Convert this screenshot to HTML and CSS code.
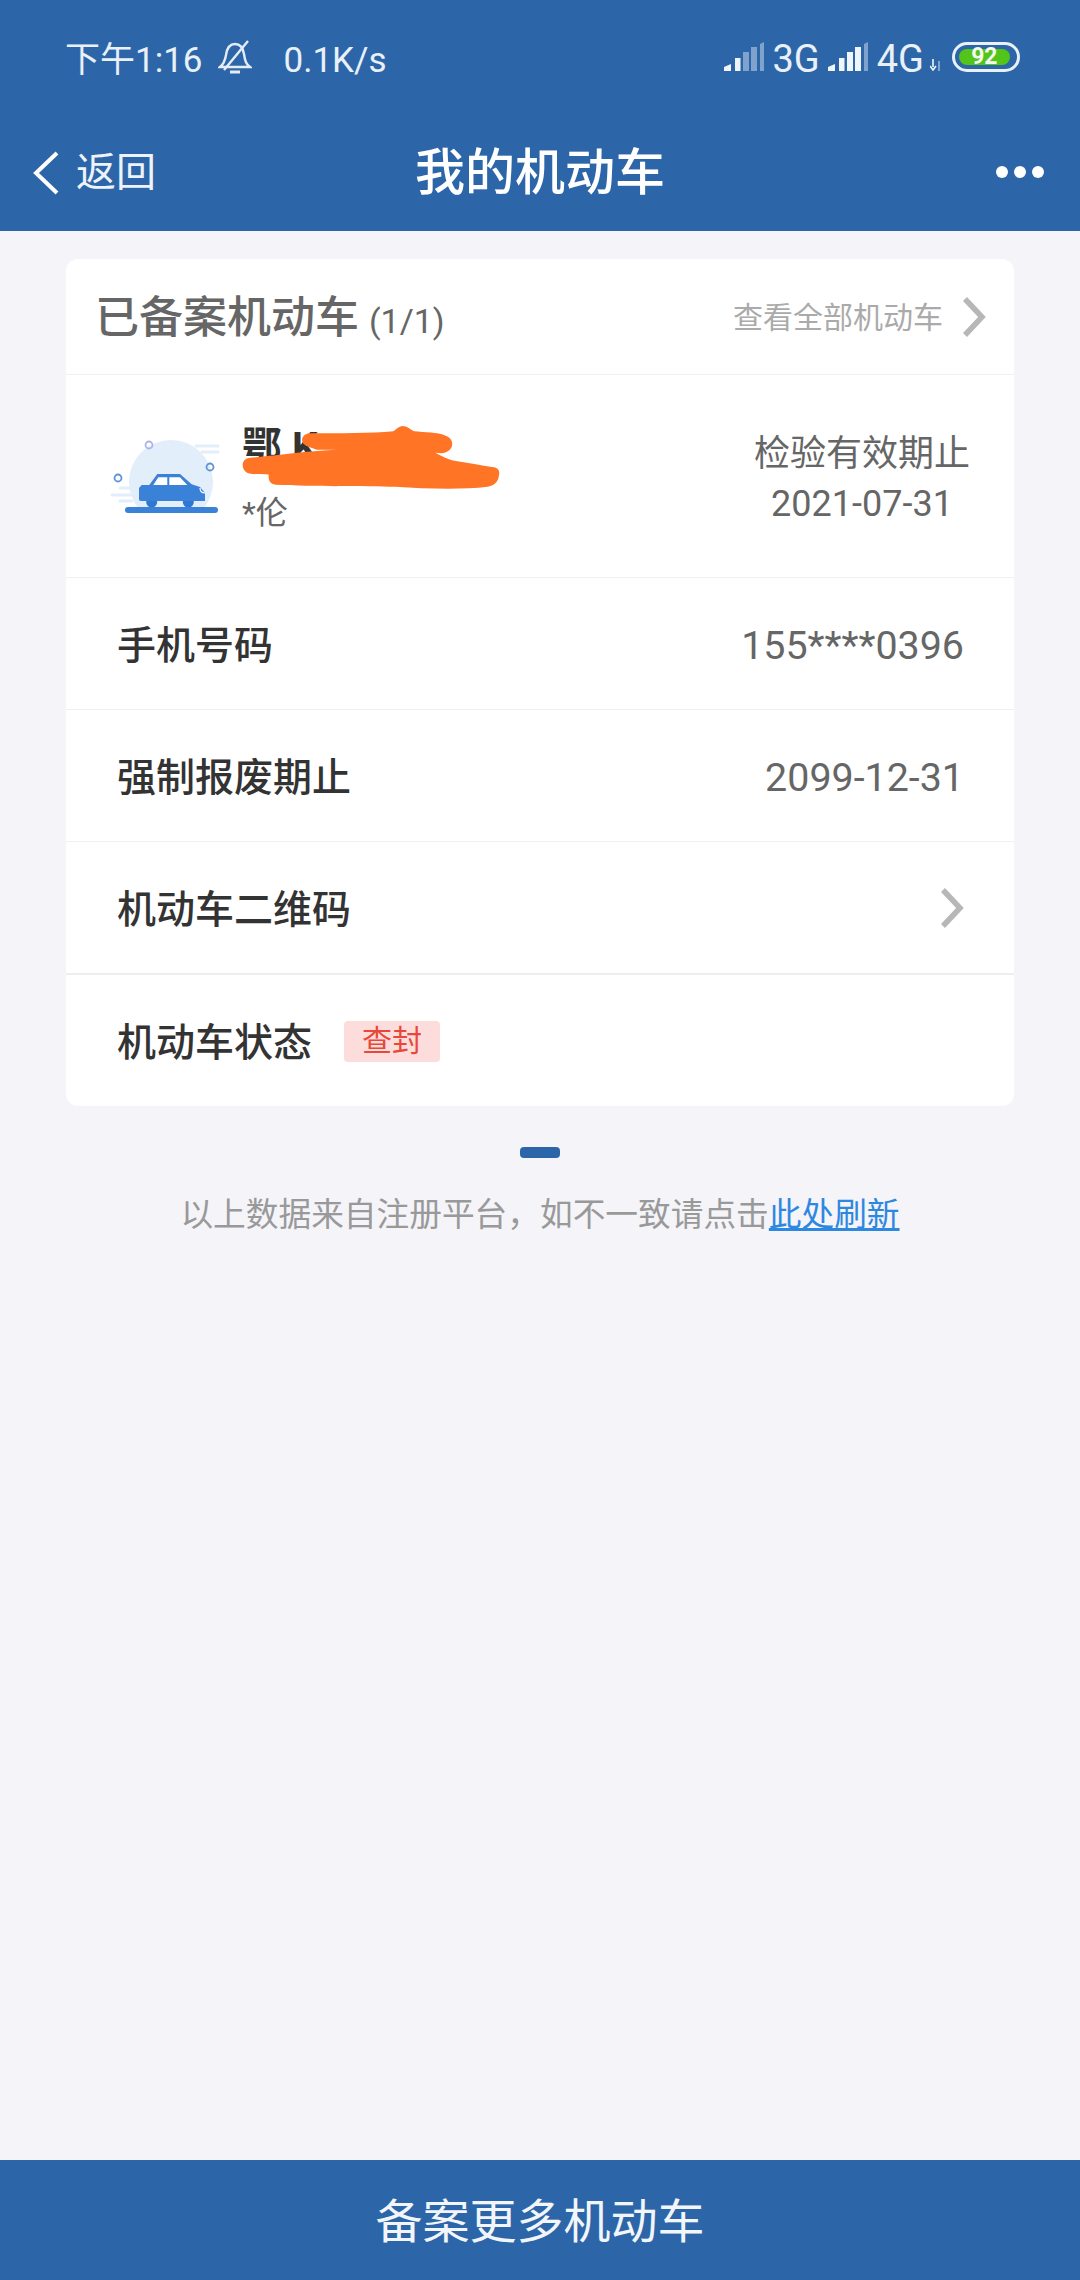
FILE: index.html
```html
<!DOCTYPE html>
<html lang="zh-CN">
<head>
  <meta charset="UTF-8">
  <title>我的机动车</title>
  <link rel="stylesheet" href="styles.css">
</head>
<body>

<header class="top">
  <div class="status">
    <div class="status-left">
      <span>下午1:16</span>
      <svg class="bell" width="34" height="36" viewBox="0 0 34 36" fill="none" stroke="#e4edf7" stroke-width="2.4">
        <path d="M2 28c4-3 5-6 6-12 1-7 4-11 9-11s8 4 9 10c1 7 2 10 6 13z"/>
        <path d="M30 2L6 31"/>
        <path d="M12 33h10" stroke-width="3"/>
      </svg>
      <span class="speed">0.1K/s</span>
    </div>
    <div class="status-right">
      <svg class="signal" width="40" height="29" viewBox="0 0 40 29">
        <path d="M0 29v-4l7-3v7z" fill="#f0f5fb"/>
        <rect x="11" y="16" width="5.5" height="13" fill="#f0f5fb"/>
        <rect x="19" y="10" width="6" height="19" fill="#7fa3cd"/>
        <rect x="27" y="5" width="6" height="24" fill="#7fa3cd"/>
        <path d="M36 2l4-2v29h-4z" fill="#7fa3cd"/>
      </svg>
      <span class="net">3G</span>
      <svg class="signal" width="40" height="29" viewBox="0 0 40 29">
        <path d="M0 29v-4l7-3v7z" fill="#f0f5fb"/>
        <rect x="11" y="16" width="5.5" height="13" fill="#f0f5fb"/>
        <rect x="19" y="10" width="6" height="19" fill="#f0f5fb"/>
        <rect x="27" y="5" width="6" height="24" fill="#f0f5fb"/>
        <path d="M36 2l4-2v29h-4z" fill="#7fa3cd"/>
      </svg>
      <span class="net">4G</span>
      <svg class="arrows" width="12" height="12" viewBox="0 0 12 12">
        <path d="M3 0v8M0 7l3 4 3-4" fill="none" stroke="#f0f5fb" stroke-width="1.6"/>
        <path d="M9 12V2" stroke="#7fa3cd" stroke-width="2"/>
      </svg>
      <div class="battery"><div class="battery-fill">92</div></div>
    </div>
  </div>
  <nav class="nav">
    <div class="back">
      <svg width="28" height="44" viewBox="0 0 28 44" fill="none" stroke="#fff" stroke-width="4">
        <path d="M25 2L4 22l21 20"/>
      </svg>
      <span>返回</span>
    </div>
    <h1>我的机动车</h1>
    <div class="more"><i></i><i></i><i></i></div>
  </nav>
</header>

<main class="content">
  <section class="card">
    <div class="card-head">
      <div class="card-title">已备案机动车 <small>(1/1)</small></div>
      <div class="see-all">
        <span>查看全部机动车</span>
        <svg width="24" height="40" viewBox="0 0 24 40" fill="none" stroke="#b7b7b7" stroke-width="5.5">
          <path d="M3 2l17 18L3 38"/>
        </svg>
      </div>
    </div>

    <div class="vehicle">
      <svg class="car" width="112" height="88" viewBox="0 0 112 88">
        <path d="M29.700 78A42 42 0 1 1 92.300 78z" fill="#e3eefb"/>
        <g fill="none" stroke="#e3eefb" stroke-width="3" stroke-linecap="round">
          <path d="M86 14h22M92 20h16M2 63h20M10 56h10M10 69h12"/>
        </g>
        <circle cx="39" cy="13" r="3.500" fill="none" stroke="#a9b4ea" stroke-width="1.800"/>
        <circle cx="8" cy="46" r="3.500" fill="none" stroke="#5f93d6" stroke-width="1.800"/>
        <circle cx="100" cy="35" r="3.500" fill="none" stroke="#5f93d6" stroke-width="1.800"/>
        <circle cx="41.700" cy="70" r="5.500" fill="#2f78d2"/>
        <circle cx="78.300" cy="70" r="5.500" fill="#2f78d2"/>
        <path d="M47.300 42H70l11.700 10.300L90 55l5 6v8H31c-1.500 0-2-1-2-2V56l2.700-3h7.600z" fill="#3a81d8"/>
        <path d="M43.300 53l5-7.700h9V53zM59.300 45.300H70l7.300 7.700h-18z" fill="#fff"/>
        <path d="M90 56c0 3 2 5 5 5" fill="none" stroke="#fff" stroke-width="1.200"/>
        <rect x="15" y="75" width="93" height="6" rx="3" fill="#3a81d8"/>
      </svg>
      <div class="plate">
        <div class="plate-no">鄂 K</div>
        <div class="owner">*伦</div>
      </div>
      <div class="valid">
        <div>检验有效期止</div>
        <div>2021-07-31</div>
      </div>
      <svg class="scribble" width="270" height="70" viewBox="0 0 264 68" preserveAspectRatio="none">
        <path d="M68 9c30 0 60 0 82-2 3-2 6-5 9-5 4 0 7 3 11 5 10 1 24 1 30 4 10 3 10 14 0 17-3 1-6 0-9 0 6 3 13 7 20 8 12 2 24 4 37 6 6 1 6 5 5 9-1 6-5 9-11 10-25 3-60 2-90 0-30-1-80 0-117-2-8-1-7-8-7-10-7 0-14 0-19-1-8-2-9-14 0-15 30-3 60-7 86-8H75c-5-2-10-3-12-5-4-3-3-10 5-11z" fill="#ff7425"/>
      </svg>
    </div>

    <div class="row">
      <span class="row-label">手机号码</span>
      <span class="row-value">155****0396</span>
    </div>
    <div class="row">
      <span class="row-label">强制报废期止</span>
      <span class="row-value">2099-12-31</span>
    </div>
    <div class="row row-qr">
      <span class="row-label">机动车二维码</span>
      <svg width="24" height="40" viewBox="0 0 24 40" fill="none" stroke="#b7b7b7" stroke-width="5.5">
        <path d="M3 2l17 18L3 38"/>
      </svg>
    </div>
    <div class="row row-status">
      <span class="row-label">机动车状态</span>
      <span class="badge">查封</span>
    </div>
  </section>

  <div class="dash"></div>
  <p class="note">以上数据来自注册平台<span class="comma">，</span>如不一致请点击<a href="#">此处刷新</a></p>
</main>

<footer class="bottom">备案更多机动车</footer>

</body>
</html>
```

FILE: styles.css
```css
* {
  box-sizing: border-box;
}

body {
  margin: 0;
  display: flex;
  flex-direction: column;
  height: 2280px;
  font-family: Roboto, "Noto Sans CJK SC", sans-serif;
  background: #f4f4f9;
  color: #333;
}

.top {
  height: 231px;
  background: #2d66a8;
  color: #fff;
}

.status {
  height: 113px;
  padding: 0 60px 0 65px;
  display: flex;
  justify-content: space-between;
  align-items: center;
  color: #e9f0f8;
  font-size: 35px;
}

.status-left {
  display: flex;
  align-items: baseline;
}

.bell {
  margin-left: 15px;
  align-self: center;
}

.speed {
  margin-left: 32px;
}

.status-right {
  display: flex;
  align-items: center;
}

.signal {
  margin-right: 9px;
}

.net {
  margin-right: 8px;
  font-size: 38px;
  line-height: 36px;
  padding-top: 4px;
}

.arrows {
  margin: 16px 10px 0 -2px;
}

.battery {
  width: 68px;
  height: 30px;
  border: 3px solid #e9f0f8;
  border-radius: 15px;
  padding: 4px;
}

.battery-fill {
  height: 100%;
  width: 94%;
  background: #52c41a;
  border-radius: 8px;
  color: #f4f9ee;
  font-size: 23px;
  font-weight: 700;
  line-height: 16px;
  text-align: center;
}

.nav {
  height: 118px;
  position: relative;
  display: flex;
  justify-content: center;
  align-items: center;
  padding-bottom: 9px;
}

.nav h1 {
  margin: 0;
  font-size: 50px;
  font-weight: 500;
}

.back {
  position: absolute;
  left: 32px;
  top: 38px;
  display: flex;
  align-items: center;
  gap: 16px;
  font-size: 40px;
  line-height: 44px;
  color: #eef3f9;
}

.more {
  position: absolute;
  right: 36px;
  top: 53px;
  display: flex;
  gap: 6px;
}

.more i {
  width: 12px;
  height: 12px;
  border-radius: 50%;
  background: #fff;
}

.content {
  flex: 1;
  padding: 28px 66px 0;
}

.card {
  background: #fff;
  border-radius: 12px;
}

.card-head {
  height: 116px;
  padding: 0 28px 0 29px;
  display: flex;
  justify-content: space-between;
  align-items: center;
  border-bottom: 1px solid #f0f0f0;
}

.card-title {
  margin-bottom: 6px;
  font-size: 44px;
  font-weight: 500;
  color: #666;
}

.card-title small {
  margin-left: -1px;
  font-size: 34px;
  font-weight: 400;
}

.see-all {
  display: flex;
  align-items: center;
  gap: 19px;
  font-size: 30px;
  color: #aaa;
}

.see-all span {
  margin-bottom: 4px;
}

.vehicle {
  height: 203px;
  position: relative;
  display: flex;
  align-items: center;
  padding: 0 44px;
  border-bottom: 1px solid #f0f0f0;
}

.plate {
  margin: 6px 0 0 20px;
  flex: 1;
}

.plate-no {
  font-size: 40px;
  font-weight: 700;
  line-height: 56px;
  color: #333;
}

.owner {
  margin-top: 12px;
  font-size: 32px;
  line-height: 50px;
  color: #666;
}

.valid {
  margin-top: 5px;
  font-size: 36px;
  line-height: 50px;
  text-align: center;
  color: #666;
}

.scribble {
  position: absolute;
  left: 174px;
  top: 49px;
}

.row {
  height: 132px;
  padding: 0 50px 0 51px;
  display: flex;
  justify-content: space-between;
  align-items: center;
  border-bottom: 1px solid #f0f0f0;
}

.row-qr {
  height: 133px;
  border-bottom: 2px solid #eeeeee;
}

.row-status {
  height: 131px;
  justify-content: flex-start;
  gap: 32px;
  border-bottom: none;
}

.row-label {
  margin-bottom: 3px;
  font-size: 39px;
  font-weight: 500;
  color: #333;
}

.row-value {
  margin-top: 4px;
  font-size: 39.4px;
  color: #666;
}

.badge {
  width: 96px;
  height: 41px;
  margin-top: 1px;
  background: #fddcdc;
  border-radius: 4px;
  color: #e8483a;
  font-size: 30px;
  line-height: 40px;
  text-align: center;
}

.dash {
  width: 40px;
  height: 11px;
  margin: 41px auto 0;
  background: #2d66a8;
  border-radius: 4px;
}

.note {
  margin: 30px 0 0;
  font-size: 32.7px;
  line-height: 48px;
  text-align: center;
  color: #999;
}

.note .comma {
  font-family: "Noto Sans CJK TC", sans-serif;
}

.note a {
  color: #2e88e0;
}

.bottom {
  height: 120px;
  padding-top: 4px;
  background: #2d66a8;
  color: #f2f6fb;
  font-size: 47px;
  line-height: 116px;
  text-align: center;
}
```
